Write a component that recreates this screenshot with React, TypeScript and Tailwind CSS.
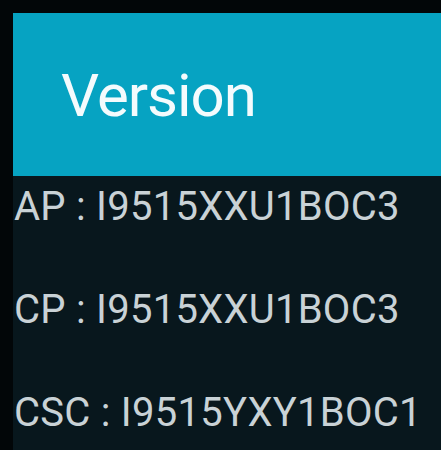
export default function App() {
  const rows = [
    { label: "AP", value: "I9515XXU1BOC3" },
    { label: "CP", value: "I9515XXU1BOC3" },
    { label: "CSC", value: "I9515YXY1BOC1" },
  ];

  return (
    <div className="w-[441px] h-[450px] overflow-hidden bg-[#020608] pl-[13px] pt-[13px] font-['Roboto',sans-serif]">
      <div className="h-full bg-[#08171d]">
        <div className="h-[163px] bg-[#06a3c2] pl-[48px] pt-[53px]">
          <h1 className="text-[60px] leading-[60px] tracking-[-1px] text-[#f4fbfd]">Version</h1>
        </div>
        <div className="flex flex-col gap-[63px] pt-[11px] pl-[1px]">
          {rows.map((row) => (
            <p key={row.label} className="text-[40px] leading-[40px] tracking-[0.25px] text-[#c9d2d6] whitespace-nowrap">
              {row.label} : {row.value}
            </p>
          ))}
        </div>
      </div>
    </div>
  );
}
